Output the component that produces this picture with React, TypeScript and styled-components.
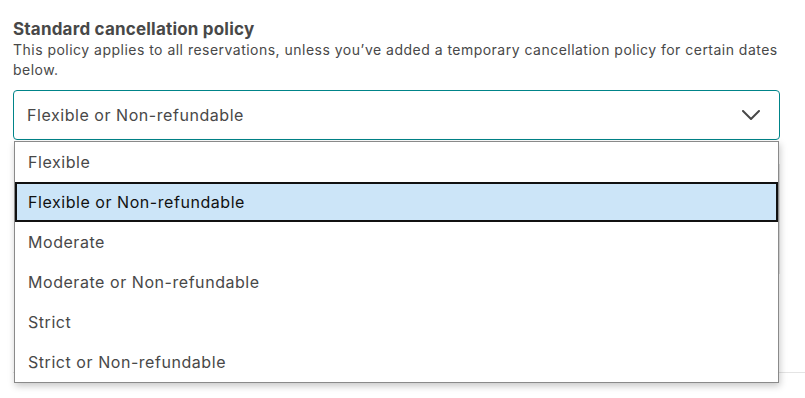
import React from 'react'
import styled, { createGlobalStyle } from 'styled-components'

const GlobalStyle = createGlobalStyle`
  html, body {
    margin: 0;
    padding: 0;
    background: #fff;
  }
  body {
    font-family: Inter, "Noto Sans", sans-serif;
    color: #484848;
  }
`

const PAGE = styled.div`
  position: relative;
  width: 805px;
  height: 398px;
  overflow: hidden;
  padding: 18px 25px 0 13px;
  box-sizing: border-box;
`

const TITLE = styled.h2`
  margin: 0;
  font-size: 17px;
  line-height: 22px;
  font-weight: 700;
  letter-spacing: 0.2px;
  color: #484848;
`

const HINT = styled.p`
  margin: 0;
  font-size: 14px;
  line-height: 20px;
  letter-spacing: 0.48px;
  color: #484848;
`

const FIELD = styled.div`
  position: relative;
  margin-top: 10px;
`

const SELECT_BOX = styled.div`
  display: flex;
  align-items: center;
  justify-content: space-between;
  height: 50px;
  box-sizing: border-box;
  padding: 0 19px 0 13px;
  border: 1px solid #008489;
  border-radius: 4px;
  font-size: 16px;
  letter-spacing: 0.55px;
  color: #484848;
`

const BELOW = styled.div`
  height: 110px;
  margin-top: 24px;
  border-right: 2px solid #e4e4e4;
`

const DIVIDER = styled.div`
  margin: 98px -25px 0 0;
  border-top: 1px solid #e4e4e4;
`

const LIST = styled.ul`
  position: absolute;
  top: 51px;
  left: 1px;
  right: 1px;
  margin: 0;
  padding: 0;
  list-style: none;
  background: #fff;
  border: 1px solid #8a8a8a;
  box-shadow: 1px 3px 7px rgba(0, 0, 0, 0.22);
`

const OPTION = styled.li<{ $selected?: boolean }>`
  height: 40px;
  box-sizing: border-box;
  display: flex;
  align-items: center;
  padding-left: ${({ $selected }) => ($selected ? '11px' : '13px')};
  font-size: 16px;
  letter-spacing: 0.55px;
  color: ${({ $selected }) => ($selected ? '#111' : '#484848')};
  background: ${({ $selected }) => ($selected ? '#cce5f8' : 'transparent')};
  border: ${({ $selected }) => ($selected ? '2px solid #111' : 'none')};
`

const options = [
  'Flexible',
  'Flexible or Non-refundable',
  'Moderate',
  'Moderate or Non-refundable',
  'Strict',
  'Strict or Non-refundable',
]

const Chevron = () => (
  <svg width="18" height="10" viewBox="0 0 18 10" fill="none">
    <path d="M1 1l8 8 8-8" stroke="#484848" strokeWidth="2" strokeLinecap="round" strokeLinejoin="round" />
  </svg>
)

export default function App() {
  const selected = 'Flexible or Non-refundable'
  return (
    <PAGE>
      <GlobalStyle />
      <TITLE>Standard cancellation policy</TITLE>
      <HINT>
        This policy applies to all reservations, unless you’ve added a temporary cancellation policy for certain dates
        below.
      </HINT>
      <FIELD>
        <SELECT_BOX>
          <span>{selected}</span>
          <Chevron />
        </SELECT_BOX>
        <BELOW />
        <DIVIDER />
        <LIST>
          {options.map((o) => (
            <OPTION key={o} $selected={o === selected}>
              {o}
            </OPTION>
          ))}
        </LIST>
      </FIELD>
    </PAGE>
  )
}
